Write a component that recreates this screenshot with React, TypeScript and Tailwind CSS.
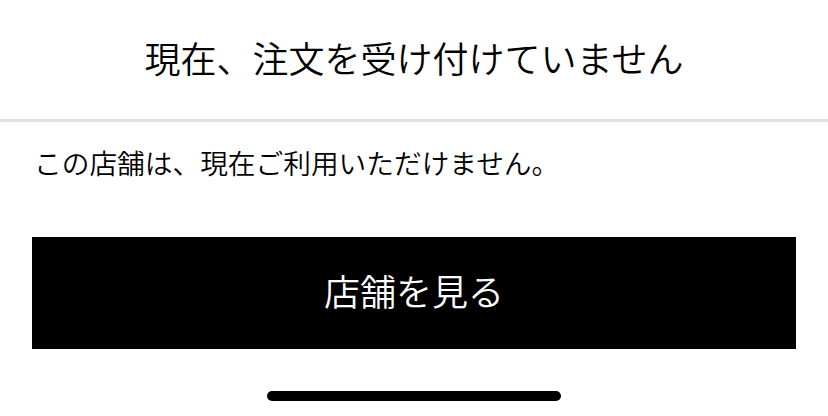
import React from "react";

export default function App() {
  return (
    <div
      className="w-[828px] h-[416px] bg-white flex flex-col text-black overflow-hidden font-[350]"
      style={{ fontFamily: '"Noto Sans CJK JP", "Noto Sans", sans-serif' }}
    >
      <header className="h-[119px] pb-[5px] flex items-center justify-center text-[36px] leading-none">
        現在、注文を受け付けていません
      </header>
      <div className="h-[3px] bg-[#e1e1e1]" />
      <p className="px-[34px] mt-[20px] text-[27.7px] leading-[40px]">
        この店舗は、現在ご利用いただけません。
      </p>
      <button className="mx-[32px] mt-[55px] h-[112px] pb-[6px] bg-black text-white text-[36px] leading-none flex items-center justify-center font-[350]">
        店舗を見る
      </button>
      <div className="self-center mt-[42px] w-[294px] h-[10px] rounded-full bg-black" />
    </div>
  );
}
